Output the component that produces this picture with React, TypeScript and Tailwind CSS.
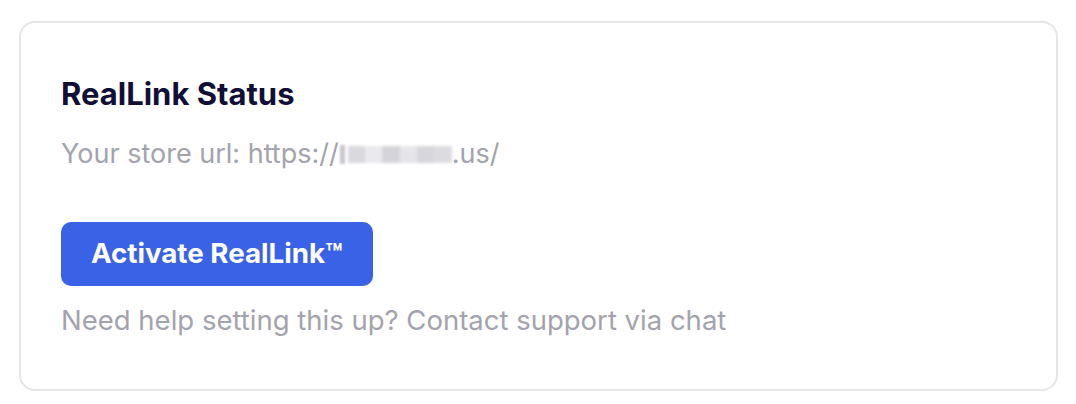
import React from "react";

export default function App() {
  return (
    <div className="w-[1076px] h-[404px] bg-white pt-[21px] pl-[19px]" style={{ fontFamily: "Inter, 'Noto Sans', sans-serif" }}>
      <div className="w-[1039px] h-[370px] rounded-[16px] border-2 border-[#e6e6e8] bg-white pl-[40px] pt-[52px]">
        <h1 className="text-[31px] leading-[38px] font-bold text-[#110f35]">RealLink Status</h1>
        <p className="mt-[25px] text-[27px] leading-[32px] text-[#a3a3ad] flex items-center">
          <span>Your store url: https://</span>
          <span className="inline-block w-[5px] h-[19px] bg-[#c8c8ce] ml-[1px] blur-[1px]" />
          <span className="inline-flex ml-[3px] h-[17px] w-[104px] blur-[1.5px]">
            <span className="flex-1 bg-[#d9d9de]" />
            <span className="flex-1 bg-[#eaeaee]" />
            <span className="flex-1 bg-[#d4d4da]" />
            <span className="flex-1 bg-[#e6e6ea]" />
            <span className="flex-1 bg-[#d6d6dc]" />
            <span className="flex-1 bg-[#dcdce0]" />
          </span>
          <span>.us/</span>
        </p>
        <button className="mt-[52px] h-[64px] px-[30px] rounded-[10px] bg-[#3a62e6] text-white text-[27.7px] font-bold">
          Activate RealLink™
        </button>
        <p className="mt-[18px] text-[27.5px] leading-[32px] text-[#a3a3ad]">Need help setting this up? Contact support via chat</p>
      </div>
    </div>
  );
}
